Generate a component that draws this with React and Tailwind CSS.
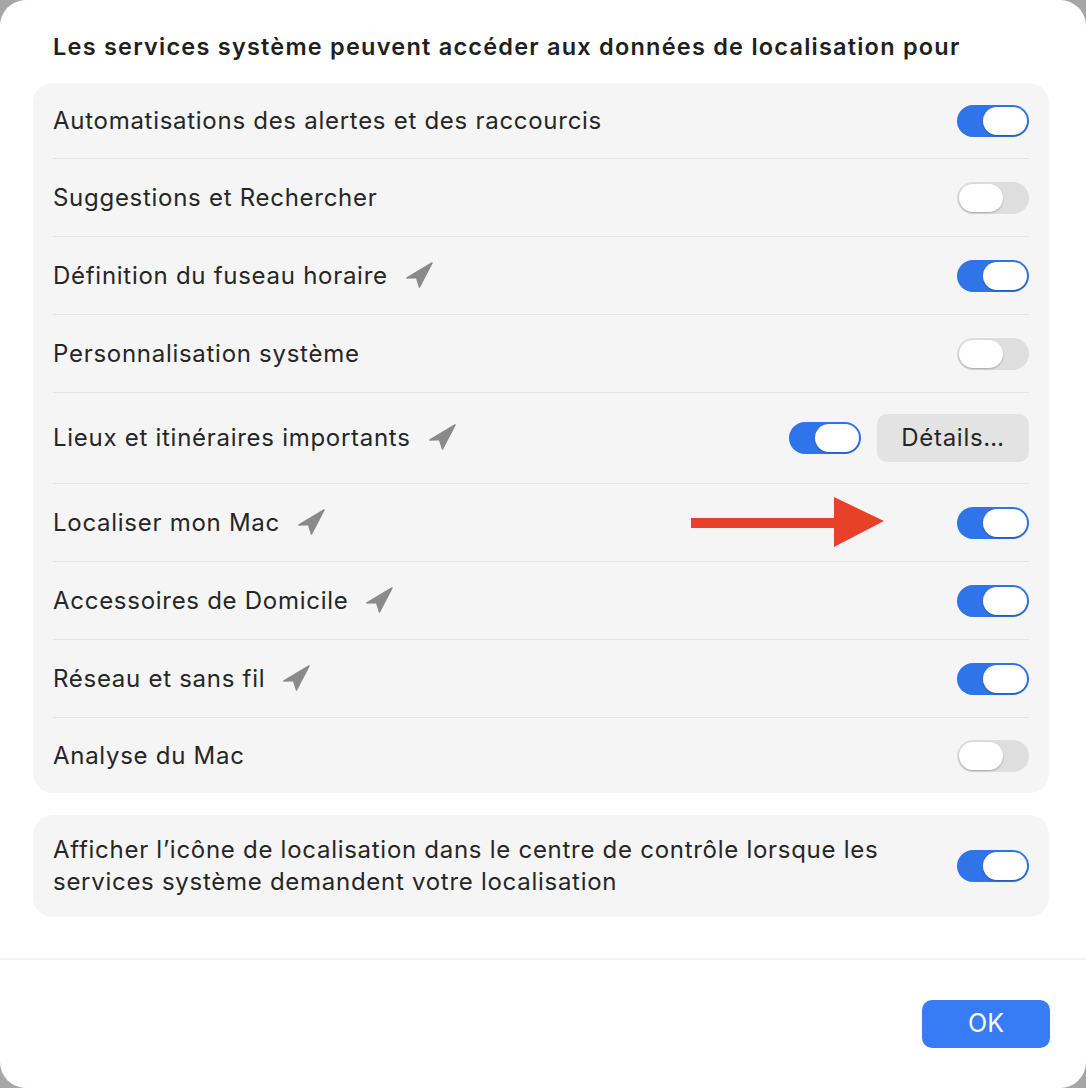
import React from 'react';

const rows = [
  { label: 'Automatisations des alertes et des raccourcis', on: true, h: 'h-[75px]' },
  { label: 'Suggestions et Rechercher', on: false, h: 'h-[78px]' },
  { label: 'Définition du fuseau horaire', on: true, arrow: true, h: 'h-[78px]' },
  { label: 'Personnalisation système', on: false, h: 'h-[78px]' },
  { label: 'Lieux et itinéraires importants', on: true, arrow: true, details: true, h: 'h-[91px]' },
  { label: 'Localiser mon Mac', on: true, arrow: true, pointer: true, h: 'h-[78px]' },
  { label: 'Accessoires de Domicile', on: true, arrow: true, h: 'h-[78px]' },
  { label: 'Réseau et sans fil', on: true, arrow: true, h: 'h-[78px]' },
  { label: 'Analyse du Mac', on: false, h: 'h-[76px]' },
];

function LocationArrow() {
  return (
    <svg width="27" height="26" viewBox="0 0 27 26" className="ml-[18px] shrink-0 -mt-[2px]">
      <path d="M26 1 L1 16 L10.5 15.5 L13.5 25 Z" fill="#8a8a8a" stroke="#8a8a8a" strokeWidth="1.5" strokeLinejoin="round" />
    </svg>
  );
}

function Toggle({ on }) {
  return (
    <div
      className={`relative w-[72px] h-[32px] rounded-full shrink-0 ${
        on ? 'bg-[#2f74e8]' : 'bg-[#dedede]'
      }`}
    >
      <div
        className={`absolute top-[2px] h-[28px] w-[44px] rounded-full bg-white shadow-[0_1px_2px_rgba(0,0,0,0.25)] ${
          on ? 'right-[2px]' : 'left-[2px]'
        }`}
      ></div>
    </div>
  );
}

function RedArrow() {
  return (
    <svg width="194" height="52" viewBox="0 0 194 52" className="mr-[72px]">
      <rect x="0" y="21" width="150" height="10" fill="#e8412a" />
      <polygon points="143,0 193,24 143,50" fill="#e8412a" />
    </svg>
  );
}

function App() {
  return (
    <div className="min-h-screen bg-[#a6a6a6]" style={{ fontFamily: 'Inter, "Noto Sans", sans-serif' }}>
      <div className="w-[1086px] h-[1088px] bg-white rounded-[26px] flex flex-col text-[#262626]">
        <div className="pl-[33px] pr-[37px] pt-[30px] flex-1">
          <h1 className="px-5 text-[23.5px] font-semibold leading-[34px] tracking-[0.052em] whitespace-nowrap text-[#1f1f1f]">
            Les services système peuvent accéder aux données de localisation pour
          </h1>

          <div className="mt-[19px] bg-[#f5f5f5] rounded-[20px] px-5">
            {rows.map((row, i) => (
              <div
                key={row.label}
                className={`flex items-center ${row.h} ${i > 0 ? 'border-t border-[#e4e4e4]' : ''}`}
              >
                <span className="text-[24px] leading-none tracking-[0.03em]">{row.label}</span>
                {row.arrow && <LocationArrow />}
                <div className="flex-1"></div>
                {row.pointer && <RedArrow />}
                <Toggle on={row.on} />
                {row.details && (
                  <button className="ml-4 h-[48px] w-[152px] rounded-[10px] bg-[#e3e3e3] text-[24px] tracking-[0.03em] text-[#262626]">
                    Détails…
                  </button>
                )}
              </div>
            ))}
          </div>

          <div className="mt-[22px] bg-[#f5f5f5] rounded-[20px] px-5 h-[102px] flex items-center justify-between">
            <p className="text-[24px] leading-[32px] tracking-[0.03em] w-[840px]">
              Afficher l’icône de localisation dans le centre de contrôle lorsque les services système demandent votre localisation
            </p>
            <Toggle on />
          </div>
        </div>

        <div className="border-t-2 border-[#f2f2f2] h-[130px] flex items-center justify-end pr-[36px]">
          <button className="h-[48px] w-[128px] rounded-[10px] bg-[#377cf5] text-white text-[25px]">OK</button>
        </div>
      </div>
    </div>
  );
}

export default App;
